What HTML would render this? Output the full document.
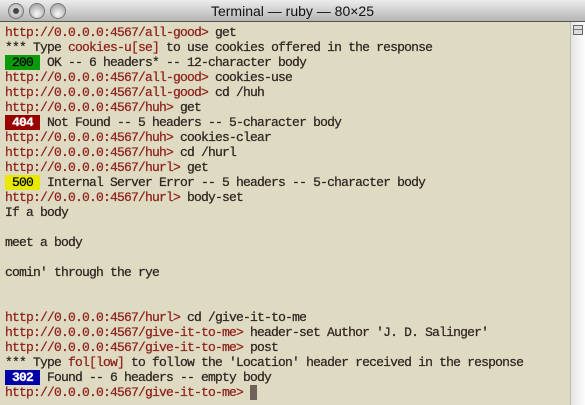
<!DOCTYPE html>
<html><head><style>
html,body{margin:0;padding:0;width:585px;height:405px;overflow:hidden;background:#dfdbc3;}
#title{position:absolute;left:0;top:0;width:585px;height:21px;background:linear-gradient(#ececec,#b5b5b5);border-bottom:1px solid #555;font:14px "Liberation Sans",sans-serif;color:#111;text-align:center;line-height:22px;}
.b{position:absolute;top:3px;width:16px;height:16px;border-radius:50%;background:radial-gradient(circle at 50% 70%,#fafafa,#c0c0c0 55%,#9a9a9a);border:1px solid #777;box-sizing:border-box;}
#sb{position:absolute;left:570px;top:22px;width:15px;height:383px;background:linear-gradient(90deg,#e4e4e4,#fff);border-left:1px solid #bbb;}
#sbt{position:absolute;left:573px;top:25px;width:10px;height:10px;border:1px solid #666;box-sizing:border-box;background:linear-gradient(#777 0 0) 0 3px/100% 1px no-repeat,#ddd;}
#t{position:absolute;left:5px;top:25px;font:13px/15px "Liberation Mono",monospace;letter-spacing:-0.8px;color:#2e2420;white-space:pre;-webkit-text-stroke:0.25px currentColor;}
.p{color:#8e211c;}
.r{color:#8e211c;}
.g{background:#0a9a0a;color:#000;}
.rd{background:#990000;color:#fff;font-weight:bold;}
.y{background:#e8e800;color:#000;}
.bl{background:#0000aa;color:#fff;font-weight:bold;}
.cur{background:#6e625a;}
</style></head><body>
<div id="title">Terminal — ruby — 80×25</div>
<div class="b" style="left:8px;background:radial-gradient(circle,#444 0 2.5px,#d8d8d8 3.5px,#a0a0a0)"></div>
<div class="b" style="left:29px"></div>
<div class="b" style="left:50px"></div>
<div id="sb"></div><div id="sbt"></div>
<div id="t"><span class="p">http://0.0.0.0:4567/all-good&gt;</span> get
*** Type <span class="r">cookies-u[se]</span> to use cookies offered in the response
<span class="g"> 200 </span> OK -- 6 headers* -- 12-character body
<span class="p">http://0.0.0.0:4567/all-good&gt;</span> cookies-use
<span class="p">http://0.0.0.0:4567/all-good&gt;</span> cd /huh
<span class="p">http://0.0.0.0:4567/huh&gt;</span> get
<span class="rd"> 404 </span> Not Found -- 5 headers -- 5-character body
<span class="p">http://0.0.0.0:4567/huh&gt;</span> cookies-clear
<span class="p">http://0.0.0.0:4567/huh&gt;</span> cd /hurl
<span class="p">http://0.0.0.0:4567/hurl&gt;</span> get
<span class="y"> 500 </span> Internal Server Error -- 5 headers -- 5-character body
<span class="p">http://0.0.0.0:4567/hurl&gt;</span> body-set
If a body

meet a body

comin' through the rye


<span class="p">http://0.0.0.0:4567/hurl&gt;</span> cd /give-it-to-me
<span class="p">http://0.0.0.0:4567/give-it-to-me&gt;</span> header-set Author 'J. D. Salinger'
<span class="p">http://0.0.0.0:4567/give-it-to-me&gt;</span> post
*** Type <span class="r">fol[low]</span> to follow the 'Location' header received in the response
<span class="bl"> 302 </span> Found -- 6 headers -- empty body
<span class="p">http://0.0.0.0:4567/give-it-to-me&gt;</span> <span class="cur"> </span></div>
</body></html>
